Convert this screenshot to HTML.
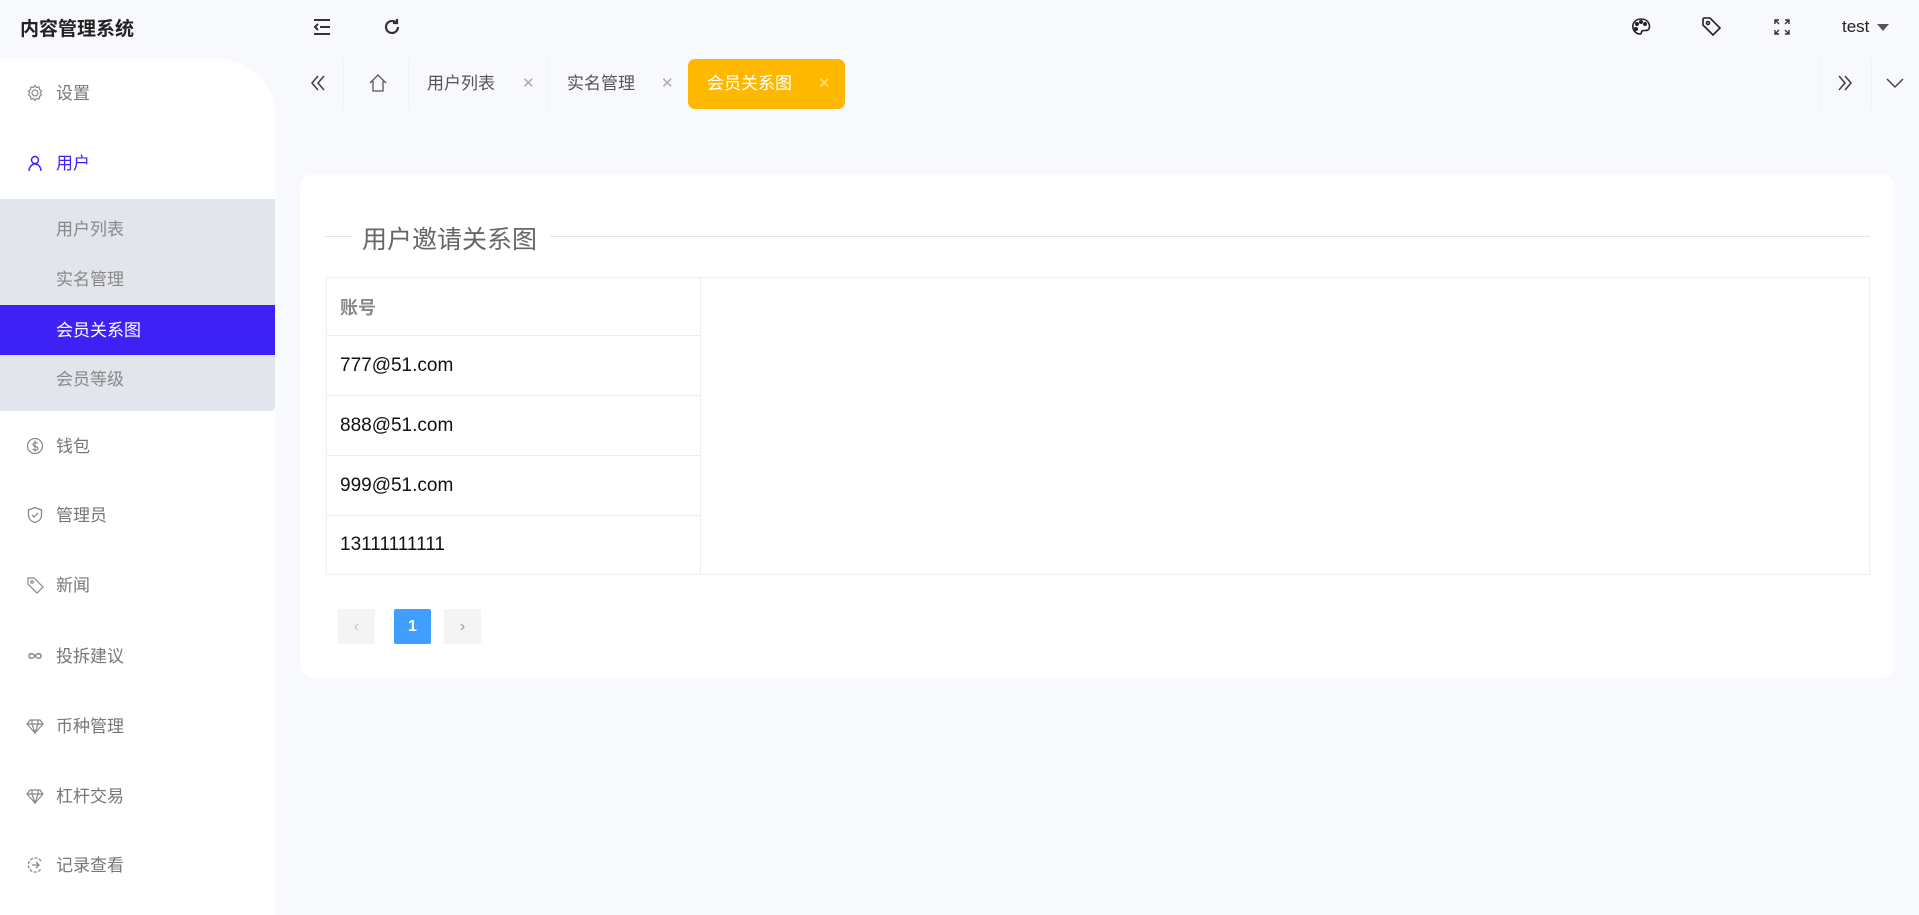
<!DOCTYPE html>
<html><head><meta charset="utf-8"><style>
*{margin:0;padding:0;box-sizing:border-box}
body{width:1919px;height:915px;background:#f8f9fc;font-family:"Liberation Sans","Noto Sans CJK SC",sans-serif;position:relative;overflow:hidden;color:#333}
.a{position:absolute}
.title{left:20px;top:14px;font-size:19px;font-weight:bold;color:#222}
.side{left:0;top:59px;width:275px;height:856px;background:#fff;border-top-right-radius:56px}
.mi{position:absolute;left:0;width:275px;height:50px;line-height:50px;font-size:17px;color:#777}
.mi svg{position:absolute;left:26px;top:16px}
.mi span{position:absolute;left:56px;top:1px}
.sub{left:0;top:199px;width:275px;height:212px;background:#e3e5ec;border-radius:0 0 4px 0}
.tab{position:absolute;top:59px;height:50px;line-height:50px;font-size:17px;color:#555}
.sep{position:absolute;top:59px;width:1px;height:50px;background:#eef0f3}
.x{color:#aaa;font-size:15px}
.card{left:300px;top:174px;width:1595px;height:504px;background:#fff;border-radius:14px}
table{border-collapse:collapse;position:absolute;left:326px;top:277px;width:1544px}
td{border:1px solid #ebeef5;height:60px;padding-left:13px;font-size:19px;color:#111}
</style></head><body>
<div class="a title">内容管理系统</div>
<svg class="a" style="left:312px;top:17px" width="20" height="20" viewBox="0 0 20 20" fill="none" stroke="#333" stroke-width="2"><path d="M2 3h16M8 10h10M2 17h16M6 7l-3 3 3 3"/></svg>
<svg class="a" style="left:382px;top:17px" width="20" height="20" viewBox="0 0 20 20" fill="none" stroke="#333" stroke-width="2.2"><path d="M16 10a6 6 0 1 1-2-4.5"/><path d="M15 2v4h-4" /></svg>
<svg class="a" style="left:1631px;top:17px" width="21" height="20" viewBox="0 0 21 20" fill="none" stroke="#222" stroke-width="1.6"><path d="M10 2C4 2 1 7 2 11c1 4 4 6 7 6 2 0 1-2 2-3s4 0 6-1c3-2 2-11-7-11z"/><circle cx="5" cy="12" r="1.2" fill="#222"/><circle cx="6" cy="7" r="1.2" fill="#222"/><circle cx="10" cy="5" r="1.2" fill="#222"/><circle cx="14" cy="7" r="1.2" fill="#222"/></svg>
<svg class="a" style="left:1701px;top:16px" width="22" height="22" viewBox="0 0 22 22" fill="none" stroke="#222" stroke-width="1.6"><path d="M2 3v6l10 10 7-7L9 2H3z"/><circle cx="7" cy="7" r="1.5"/></svg>
<svg class="a" style="left:1774px;top:19px" width="16" height="16" viewBox="0 0 16 16" fill="none" stroke="#333" stroke-width="1.4"><path d="M1 5V1h4M1 1l4 4M11 1h4v4M15 1l-4 4M1 11v4h4M1 15l4-4M15 11v4h-4M15 15l-4-4"/></svg>
<div class="a" style="left:1842px;top:17px;font-size:17px;color:#222">test</div>
<div class="a" style="left:1877px;top:24px;border-left:6px solid transparent;border-right:6px solid transparent;border-top:7px solid #555"></div>

<div class="a side"></div>
<div class="mi" style="top:68px"><svg width="18" height="18" viewBox="0 0 18 18" fill="none" stroke="#888" stroke-width="1.2"><circle cx="9" cy="9" r="3"/><path d="M9 1.5l1.5 2 2.5-.5.5 2.5 2 1.5-1.2 2 1.2 2-2 1.5-.5 2.5-2.5-.5L9 16.5l-1.5-2-2.5.5-.5-2.5-2-1.5 1.2-2-1.2-2 2-1.5.5-2.5 2.5.5z"/></svg><span>设置</span></div>
<div class="mi" style="top:138px;color:#3e22f5"><svg width="18" height="18" viewBox="0 0 18 18" fill="none" stroke="#3e22f5" stroke-width="1.4"><circle cx="9" cy="6" r="3.5"/><path d="M3 17c0-4 3-7 6-7s6 3 6 7"/></svg><span>用户</span></div>
<div class="a sub"></div>
<div class="mi" style="top:204px;color:#888"><span>用户列表</span></div>
<div class="mi" style="top:254px;color:#888"><span>实名管理</span></div>
<div class="mi" style="top:305px;background:#3e22f5;color:#fff;height:50px"><span>会员关系图</span></div>
<div class="mi" style="top:354px;color:#888"><span>会员等级</span></div>
<div class="mi" style="top:421px"><svg width="18" height="18" viewBox="0 0 18 18" fill="none" stroke="#888" stroke-width="1.2"><circle cx="9" cy="9" r="7.5"/><path d="M11.5 6.5C11 5.5 7 5 7 7.5s5 1.5 5 4S8 13.5 6.5 12M9 3.5v11"/></svg><span>钱包</span></div>
<div class="mi" style="top:490px"><svg width="18" height="18" viewBox="0 0 18 18" fill="none" stroke="#888" stroke-width="1.3"><path d="M9 1.5l6.5 2.5v5c0 4-3 6.5-6.5 7.5C5.5 15.5 2.5 13 2.5 9V4z"/><path d="M6 9l2 2 4-4"/></svg><span>管理员</span></div>
<div class="mi" style="top:560px"><svg width="18" height="18" viewBox="0 0 18 18" fill="none" stroke="#888" stroke-width="1.2"><path d="M2 2v6l9 9 6-6-9-9z"/><circle cx="6" cy="6" r="1.3"/></svg><span>新闻</span></div>
<div class="mi" style="top:631px"><svg width="18" height="18" viewBox="0 0 18 18" fill="none" stroke="#888" stroke-width="1.4"><path d="M9 9c-2-3-6-3-6 0s4 3 6 0 6-3 6 0-4 3-6 0"/></svg><span>投拆建议</span></div>
<div class="mi" style="top:701px"><svg width="18" height="18" viewBox="0 0 18 18" fill="none" stroke="#888" stroke-width="1.2"><path d="M4 3h10l3 4-8 9-8-9zM1 7h16M6 7l3 9 3-9M6 3 6 7M12 3 12 7"/></svg><span>币种管理</span></div>
<div class="mi" style="top:771px"><svg width="18" height="18" viewBox="0 0 18 18" fill="none" stroke="#888" stroke-width="1.2"><path d="M4 3h10l3 4-8 9-8-9zM1 7h16M6 7l3 9 3-9M6 3 6 7M12 3 12 7"/></svg><span>杠杆交易</span></div>
<div class="mi" style="top:840px"><svg width="18" height="18" viewBox="0 0 18 18" fill="none" stroke="#888" stroke-width="1.3"><path d="M15 5A7 7 0 1 0 15 13" stroke-dasharray="3 1.5"/><path d="M6 9h7M10 6l3 3-3 3"/></svg><span>记录查看</span></div>

<svg class="a" style="left:309px;top:74px" width="18" height="18" viewBox="0 0 18 18" fill="none" stroke="#444" stroke-width="1.6"><path d="M9 2L3 9l6 7M15 2L9 9l6 7"/></svg>
<div class="sep" style="left:343px"></div>
<svg class="a" style="left:368px;top:73px" width="20" height="20" viewBox="0 0 20 20" fill="none" stroke="#555" stroke-width="1.3"><path d="M2 10l8-8 8 8M5 8v10h10V8"/></svg>
<div class="sep" style="left:408px"></div>
<div class="tab" style="left:427px">用户列表</div><div class="tab x" style="left:522px">✕</div>
<div class="sep" style="left:547px"></div>
<div class="tab" style="left:567px">实名管理</div><div class="tab x" style="left:661px">✕</div>
<div class="a" style="left:688px;top:59px;width:157px;height:50px;background:#ffb800;border-radius:7px"></div>
<div class="tab" style="left:707px;color:#fff">会员关系图</div><div class="tab x" style="left:818px;color:#ffe08a">✕</div>
<div class="sep" style="left:1820px"></div>
<svg class="a" style="left:1836px;top:74px" width="18" height="18" viewBox="0 0 18 18" fill="none" stroke="#444" stroke-width="1.6"><path d="M3 2l6 7-6 7M9 2l6 7-6 7"/></svg>
<div class="sep" style="left:1871px"></div>
<svg class="a" style="left:1886px;top:77px" width="18" height="12" viewBox="0 0 18 12" fill="none" stroke="#444" stroke-width="1.5"><path d="M1 2l8 8 8-8"/></svg>

<div class="a card"></div>
<div class="a" style="left:324px;top:236px;width:28px;height:1px;background:#e4e6eb"></div>
<div class="a" style="left:362px;top:220px;font-size:25px;color:#666">用户邀请关系图</div>
<div class="a" style="left:550px;top:236px;width:1320px;height:1px;background:#e4e6eb"></div>
<table>
<tr><td style="width:374px;height:58px;color:#888;font-weight:bold;font-size:18px">账号</td><td rowspan="5"></td></tr>
<tr><td>777@51.com</td></tr>
<tr><td>888@51.com</td></tr>
<tr><td>999@51.com</td></tr>
<tr><td style="height:59px">13111111111</td></tr>
</table>
<div class="a" style="left:338px;top:609px;width:37px;height:35px;background:#f4f4f5;color:#c0c4cc;text-align:center;line-height:35px;font-size:16px">‹</div>
<div class="a" style="left:394px;top:609px;width:37px;height:35px;background:#409eff;color:#fff;text-align:center;line-height:35px;font-size:16px;font-weight:bold;border-radius:2px">1</div>
<div class="a" style="left:444px;top:609px;width:37px;height:35px;background:#f4f4f5;color:#999;text-align:center;line-height:35px;font-size:16px">›</div>
</body></html>
